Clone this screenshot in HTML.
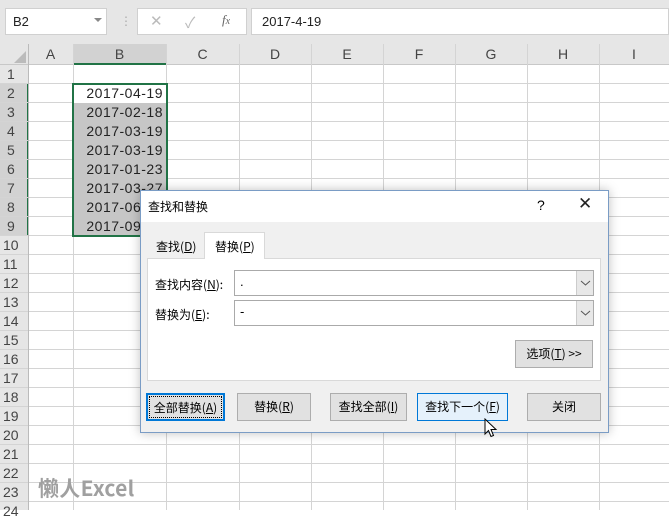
<!DOCTYPE html><html><head><meta charset="utf-8"><style>
*{margin:0;padding:0;box-sizing:border-box}
body{width:669px;height:510px;overflow:hidden;background:#fff;font-family:"Liberation Sans","Noto Sans CJK SC",sans-serif;position:relative}
.a{position:absolute}
.f{font-family:"Noto Sans CJK SC","Liberation Sans",sans-serif}
.vl{position:absolute;top:44px;bottom:0;width:1px;background:#d4d4d4}
.ch{position:absolute;top:44px;height:21px;font-size:14px;color:#444;text-align:center;line-height:21px}
.rn{position:absolute;left:0;width:28px;font-size:14px;color:#444;padding-left:7px;line-height:19px;height:19px}
.dt{position:absolute;left:74px;width:92px;height:19px;font-size:14px;color:#222;text-align:right;padding-right:3px;line-height:19px;background:#c6c6c6;letter-spacing:0.5px;white-space:nowrap}
.btn{position:absolute;top:393px;height:28px;background:#e1e1e1;border:1px solid #adadad;font-size:12px;text-align:center;line-height:26px;color:#000}
</style></head><body>
<div class="a" style="left:0;top:0;width:669px;height:44px;background:#e6e6e6"></div>
<div class="a" style="left:5px;top:8px;width:102px;height:27px;background:#fff;border:1px solid #d0d0d0;font-size:13px;padding:5px 0 0 7px;color:#222">B2<span class="a" style="left:88px;top:9px;border:4px solid transparent;border-top:4px solid #888"></span></div>
<div class="a" style="left:120px;top:14px;color:#aaa;font-size:12px">⋮</div>
<div class="a" style="left:137px;top:8px;width:110px;height:27px;background:#fff;border:1px solid #d0d0d0"></div>
<div class="a" style="left:150px;top:12px;color:#bbb;font-size:15px">✕</div>
<div class="a" style="left:185px;top:12px;color:#bbb;font-size:15px">✓</div>
<div class="a" style="left:222px;top:12px;color:#666;font-size:13px;font-style:italic;font-family:'Liberation Serif',serif">f<span style="font-size:10px">x</span></div>
<div class="a" style="left:251px;top:8px;width:418px;height:27px;background:#fff;border:1px solid #d0d0d0;font-size:13px;padding:5px 0 0 10px;color:#222">2017-4-19</div>
<div class="a" style="left:0;top:44px;width:669px;height:21px;background:#e6e6e6;border-bottom:1px solid #c8c8c8"></div>
<div class="a" style="left:0;top:65px;width:28px;height:445px;background:#e6e6e6"></div>
<div class="a" style="left:74px;top:44px;width:92px;height:21px;background:#d2d2d2;border-bottom:2px solid #217346"></div>
<div class="a" style="left:0;top:84px;width:28px;height:152px;background:#d2d2d2"></div>
<div class="a" style="left:27px;top:84px;width:2px;height:152px;background:#217346"></div>
<div class="a" style="left:0;top:65px;width:669px;height:445px;background:repeating-linear-gradient(to bottom,transparent 0,transparent 18px,#d4d4d4 18px,#d4d4d4 19px)"></div>
<div class="vl" style="left:28px;background:#bbb"></div><div class="vl" style="left:73px"></div><div class="vl" style="left:166px"></div><div class="vl" style="left:239px"></div><div class="vl" style="left:311px"></div><div class="vl" style="left:383px"></div><div class="vl" style="left:455px"></div><div class="vl" style="left:527px"></div><div class="vl" style="left:599px"></div>
<div class="ch" style="left:28px;width:45px">A</div><div class="ch" style="left:73px;width:93px">B</div><div class="ch" style="left:166px;width:73px">C</div><div class="ch" style="left:239px;width:72px">D</div><div class="ch" style="left:311px;width:72px">E</div><div class="ch" style="left:383px;width:72px">F</div><div class="ch" style="left:455px;width:72px">G</div><div class="ch" style="left:527px;width:72px">H</div><div class="ch" style="left:599px;width:70px">I</div>
<div class="a" style="left:14px;top:51px;border:6px solid transparent;border-right-color:#bbb;border-bottom-color:#bbb"></div>
<div class="rn" style="top:65px">1</div><div class="rn" style="top:84px">2</div><div class="rn" style="top:103px">3</div><div class="rn" style="top:122px">4</div><div class="rn" style="top:141px">5</div><div class="rn" style="top:160px">6</div><div class="rn" style="top:179px">7</div><div class="rn" style="top:198px">8</div><div class="rn" style="top:217px">9</div><div class="rn" style="top:236px;padding-left:3px">10</div><div class="rn" style="top:255px;padding-left:3px">11</div><div class="rn" style="top:274px;padding-left:3px">12</div><div class="rn" style="top:293px;padding-left:3px">13</div><div class="rn" style="top:312px;padding-left:3px">14</div><div class="rn" style="top:331px;padding-left:3px">15</div><div class="rn" style="top:350px;padding-left:3px">16</div><div class="rn" style="top:369px;padding-left:3px">17</div><div class="rn" style="top:388px;padding-left:3px">18</div><div class="rn" style="top:407px;padding-left:3px">19</div><div class="rn" style="top:426px;padding-left:3px">20</div><div class="rn" style="top:445px;padding-left:3px">21</div><div class="rn" style="top:464px;padding-left:3px">22</div><div class="rn" style="top:483px;padding-left:3px">23</div><div class="rn" style="top:502px;padding-left:3px">24</div>
<div class="dt" style="top:84px;background:#fff">2017-04-19</div><div class="dt" style="top:103px">2017-02-18</div><div class="dt" style="top:122px">2017-03-19</div><div class="dt" style="top:141px">2017-03-19</div><div class="dt" style="top:160px">2017-01-23</div><div class="dt" style="top:179px">2017-03-27</div><div class="dt" style="top:198px">2017-06-19</div><div class="dt" style="top:217px">2017-09-19</div>
<div class="a" style="left:72px;top:83px;width:96px;height:154px;border:2px solid #217346"></div>
<div class="a f" style="left:38px;top:473px;font-size:21px;font-weight:bold;color:#a0a0a0;letter-spacing:0.3px">懒人Excel</div>
<!-- dialog -->
<div class="a" style="left:140px;top:190px;width:469px;height:243px;background:#f0f0f0;border:1px solid #7a9cc5;box-shadow:0 0 10px rgba(0,0,0,.25)">
<div class="a" style="left:0;top:0;width:467px;height:31px;background:#fff"></div>
<div class="a f" style="left:7px;top:7px;font-size:12px">查找和替换</div>
<div class="a" style="left:396px;top:6px;font-size:14px">?</div>
<div class="a" style="left:437px;top:3px;font-size:17px;color:#222">✕</div>
<div class="a" style="left:6px;top:67px;width:454px;height:123px;background:#fff;border:1px solid #d9d9d9"></div>
<div class="a f" style="left:15px;top:47px;font-size:12px">查找(<u>D</u>)</div>
<div class="a f" style="left:63px;top:41px;width:61px;height:27px;background:#fff;border:1px solid #d9d9d9;border-bottom:none;font-size:12px;padding:5px 0 0 10px">替换(<u>P</u>)</div>
<div class="a f" style="left:14px;top:85px;font-size:12px">查找内容(<u>N</u>):</div>
<div class="a" style="left:93px;top:79px;width:360px;height:26px;background:#fff;border:1px solid #aaa;font-size:13px;padding:3px 5px">.</div>
<div class="a" style="left:435px;top:80px;width:17px;height:24px;background:#e8e8e8;border-left:1px solid #ccc"><svg width="17" height="24"><path d="M4 10 L8.5 14 L13 10" fill="none" stroke="#555" stroke-width="1"/></svg></div>
<div class="a f" style="left:14px;top:115px;font-size:12px">替换为(<u>E</u>):</div>
<div class="a" style="left:93px;top:109px;width:360px;height:26px;background:#fff;border:1px solid #aaa;font-size:13px;padding:3px 5px">-</div>
<div class="a" style="left:435px;top:110px;width:17px;height:24px;background:#e8e8e8;border-left:1px solid #ccc"><svg width="17" height="24"><path d="M4 10 L8.5 14 L13 10" fill="none" stroke="#555" stroke-width="1"/></svg></div>
<div class="a f" style="left:374px;top:149px;width:78px;height:28px;background:#e1e1e1;border:1px solid #adadad;font-size:12px;text-align:center;line-height:26px">选项(<u>T</u>) &gt;&gt;</div>
</div>
<div class="btn f" style="left:146px;width:79px;border:2px solid #0078d7;outline:1px dotted #000;outline-offset:-4px">全部替换(<u>A</u>)</div>
<div class="btn f" style="left:237px;width:74px">替换(<u>R</u>)</div>
<div class="btn f" style="left:330px;width:77px">查找全部(<u>I</u>)</div>
<div class="btn f" style="left:417px;width:91px;background:#e5f1fb;border-color:#0078d7">查找下一个(<u>F</u>)</div>
<div class="btn f" style="left:527px;width:74px">关闭</div>
<svg class="a" style="left:484px;top:418px" width="14" height="20" viewBox="0 0 14 20"><path d="M1 1 L1 16 L4.5 12.5 L7 18.5 L9.5 17.5 L7 11.5 L12 11.5 Z" fill="#fff" stroke="#000" stroke-width="1"/></svg>
</body></html>
